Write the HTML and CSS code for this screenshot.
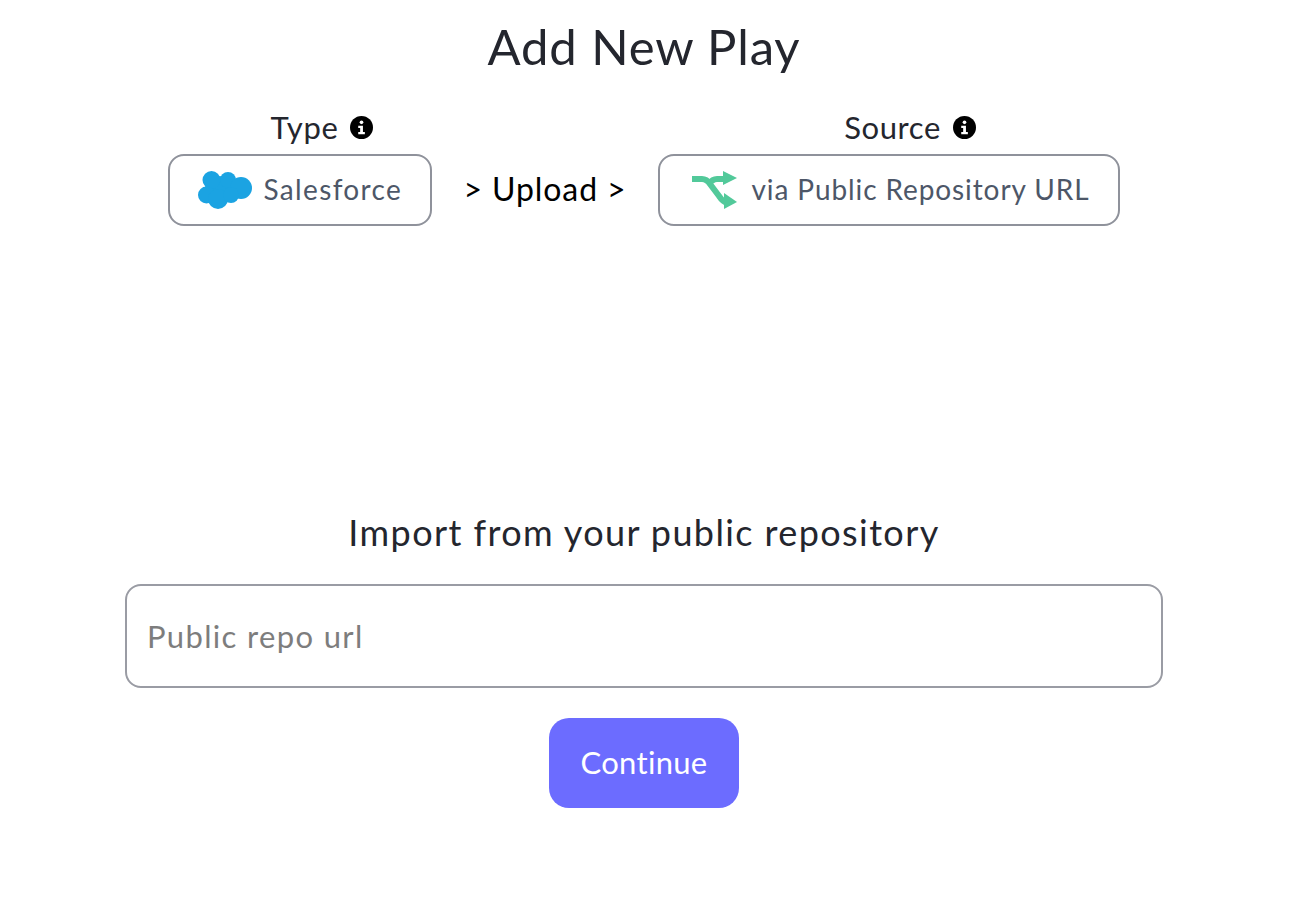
FILE: index.html
```html
<!DOCTYPE html>
<html lang="en">
  <head>
    <meta charset="UTF-8" />
    <title>Add New Play</title>
    <link rel="stylesheet" href="styles.css" />
  </head>
  <body>
    <div class="container">
      <h1 class="title">Add New Play</h1>
      <div class="steps">
        <div class="step">
          <div class="step-label">
            Type
            <svg class="info" viewBox="0 0 24 24">
              <circle cx="12" cy="12" r="12" fill="#000" />
              <circle cx="12" cy="6.6" r="1.9" fill="#fff" />
              <path d="M8.6 10.2h4.9v6.6h2v2.3H8.6v-2.3h2v-4.3h-2z" fill="#fff" />
            </svg>
          </div>
          <div class="step-box type-box">
            <svg class="cloud" viewBox="0 0 54 38">
              <g fill="#1ba3e2">
                <ellipse cx="25" cy="18" rx="18" ry="13" />
                <circle cx="13.5" cy="9" r="9" />
                <circle cx="30" cy="9" r="8" />
                <circle cx="43" cy="17" r="11" />
                <circle cx="8.5" cy="24" r="8.5" />
                <circle cx="20" cy="28" r="10" />
                <circle cx="33" cy="24" r="8" />
              </g>
            </svg>
            <span class="box-text">Salesforce</span>
          </div>
        </div>
        <div class="step-sep">&gt; Upload &gt;</div>
        <div class="step">
          <div class="step-label">
            Source
            <svg class="info" viewBox="0 0 24 24">
              <circle cx="12" cy="12" r="12" fill="#000" />
              <circle cx="12" cy="6.6" r="1.9" fill="#fff" />
              <path d="M8.6 10.2h4.9v6.6h2v2.3H8.6v-2.3h2v-4.3h-2z" fill="#fff" />
            </svg>
          </div>
          <div class="step-box source-box">
            <svg class="shuffle" viewBox="0 0 46 38">
              <g fill="none" stroke="#52c99a" stroke-width="6">
                <path d="M0 8h10c4 0 6 2 8 5l9 12c2 3 4 6 7 6h1" />
                <path d="M17 13c2-3 4-5 8-5h8" />
              </g>
              <path d="M31 0l14 7-14 7z" fill="#52c99a" />
              <path d="M32 22l13 9-13 7z" fill="#52c99a" />
            </svg>
            <span class="box-text">via Public Repository URL</span>
          </div>
        </div>
      </div>
      <h2 class="import-title">Import from your public repository</h2>
      <input class="repo-input" type="text" placeholder="Public repo url" />
      <button class="continue-btn" type="button">Continue</button>
    </div>
  </body>
</html>
```

FILE: styles.css
```css
* {
  box-sizing: border-box;
  font-family: "Lato", sans-serif;
}
html,
body {
  margin: 0;
  background-color: #fff;
}
.container {
  width: 1288px;
  display: flex;
  flex-direction: column;
  align-items: center;
  padding-top: 15px;
}
.title {
  margin: 0;
  font-size: 49px;
  line-height: 62px;
  font-weight: 400;
  letter-spacing: 0.9px;
  color: #24262e;
}
.steps {
  display: flex;
  align-items: flex-end;
  gap: 31px;
  margin-top: 32px;
}
.step {
  display: flex;
  flex-direction: column;
  align-items: center;
  gap: 9px;
}
/* label sits right of the box centre */
.step-label {
  display: flex;
  align-items: center;
  gap: 12px;
  padding-left: 43px;
  font-size: 31px;
  line-height: 36px;
  letter-spacing: 0.6px;
  color: #24262e;
}
.info {
  width: 23px;
  height: 23px;
}
.step-box {
  display: flex;
  align-items: center;
  height: 72px;
  border: 2px solid #8f929b;
  border-radius: 16px;
  font-size: 28px;
  letter-spacing: 0.9px;
  color: #4d5768;
}
.box-text {
  padding-bottom: 2px;
}
.type-box {
  width: 264px;
  padding-left: 28px;
  gap: 11px;
  letter-spacing: 1.35px;
}
.source-box {
  width: 462px;
  padding-left: 32px;
  gap: 14px;
}
.cloud {
  width: 54px;
  height: 38px;
}
.shuffle {
  width: 46px;
  height: 38px;
}
.step-sep {
  height: 72px;
  display: flex;
  align-items: center;
  padding-bottom: 3px;
  font-size: 32px;
  letter-spacing: 0.9px;
  color: #000;
}
.import-title {
  margin: 284px 0 0;
  font-size: 36px;
  line-height: 44px;
  font-weight: 400;
  letter-spacing: 1.4px;
  color: #24262e;
}
.repo-input {
  width: 1038px;
  height: 104px;
  margin-top: 30px;
  padding: 0 20px;
  border: 2px solid #9a9ca4;
  border-radius: 16px;
  font-size: 31px;
  letter-spacing: 1.35px;
  color: #24262e;
  outline: none;
}
.repo-input::placeholder {
  color: #7d7d7d;
  opacity: 1;
}
.continue-btn {
  width: 190px;
  height: 90px;
  margin-top: 30px;
  padding: 0 0 2px;
  border: none;
  border-radius: 20px;
  background-color: #6c6cff;
  font-size: 31px;
  letter-spacing: 0.3px;
  color: #fff;
}
```
